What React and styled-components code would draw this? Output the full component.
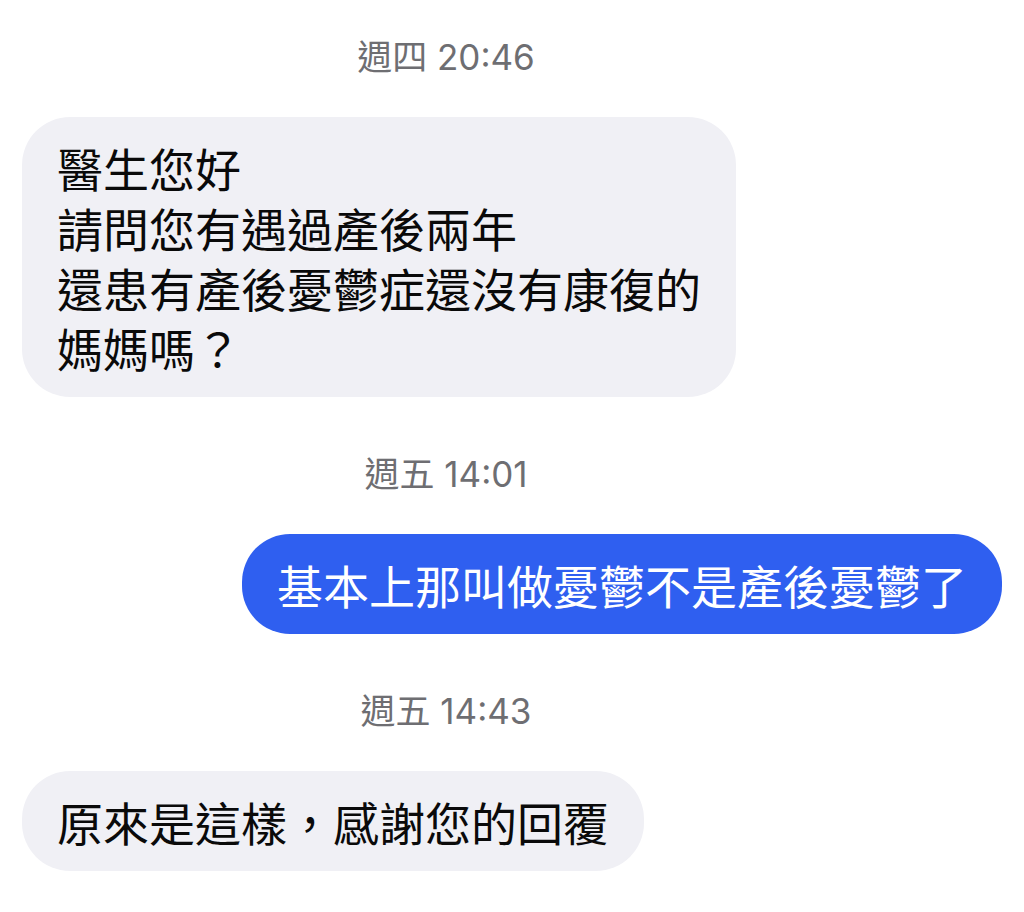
import React from "react";
import styled, { createGlobalStyle } from "styled-components";

const GlobalStyle = createGlobalStyle`
  html, body {
    margin: 0;
    padding: 0;
    background: #ffffff;
  }
  body {
    font-family: "Noto Sans CJK TC", "Noto Sans", sans-serif;
  }
`;

const Thread = styled.div`
  display: flex;
  flex-direction: column;
  padding: 37px 22px 40px;
`;

const Stamp = styled.div`
  text-align: center;
  padding-right: 132px;
  font-family: Inter, "Noto Sans CJK TC", sans-serif;
  font-size: 35px;
  line-height: 40px;
  color: #6e6e72;
  margin-top: ${(p) => (p.first ? "0" : "57px")};
  margin-bottom: 40px;
`;

const Row = styled.div`
  display: flex;
  justify-content: ${(p) => (p.mine ? "flex-end" : "flex-start")};
`;

const Bubble = styled.div`
  padding: 20px 35px;
  border-radius: 48px;
  font-size: 46px;
  line-height: 60px;
  white-space: pre-line;
  background: ${(p) => (p.mine ? "#2f5ff0" : "#f0f0f5")};
  color: ${(p) => (p.mine ? "#ffffff" : "#0a0a0a")};
`;

const messages = [
  {
    stamp: "週四 20:46",
    mine: false,
    text: "醫生您好\n請問您有遇過產後兩年\n還患有產後憂鬱症還沒有康復的\n媽媽嗎？",
  },
  {
    stamp: "週五 14:01",
    mine: true,
    text: "基本上那叫做憂鬱不是產後憂鬱了",
  },
  {
    stamp: "週五 14:43",
    mine: false,
    text: "原來是這樣，感謝您的回覆",
  },
];

export default function App() {
  return (
    <>
      <GlobalStyle />
      <Thread>
        {messages.map((m, i) => (
          <React.Fragment key={i}>
            <Stamp first={i === 0}>{m.stamp}</Stamp>
            <Row mine={m.mine}>
              <Bubble mine={m.mine}>{m.text}</Bubble>
            </Row>
          </React.Fragment>
        ))}
      </Thread>
    </>
  );
}
